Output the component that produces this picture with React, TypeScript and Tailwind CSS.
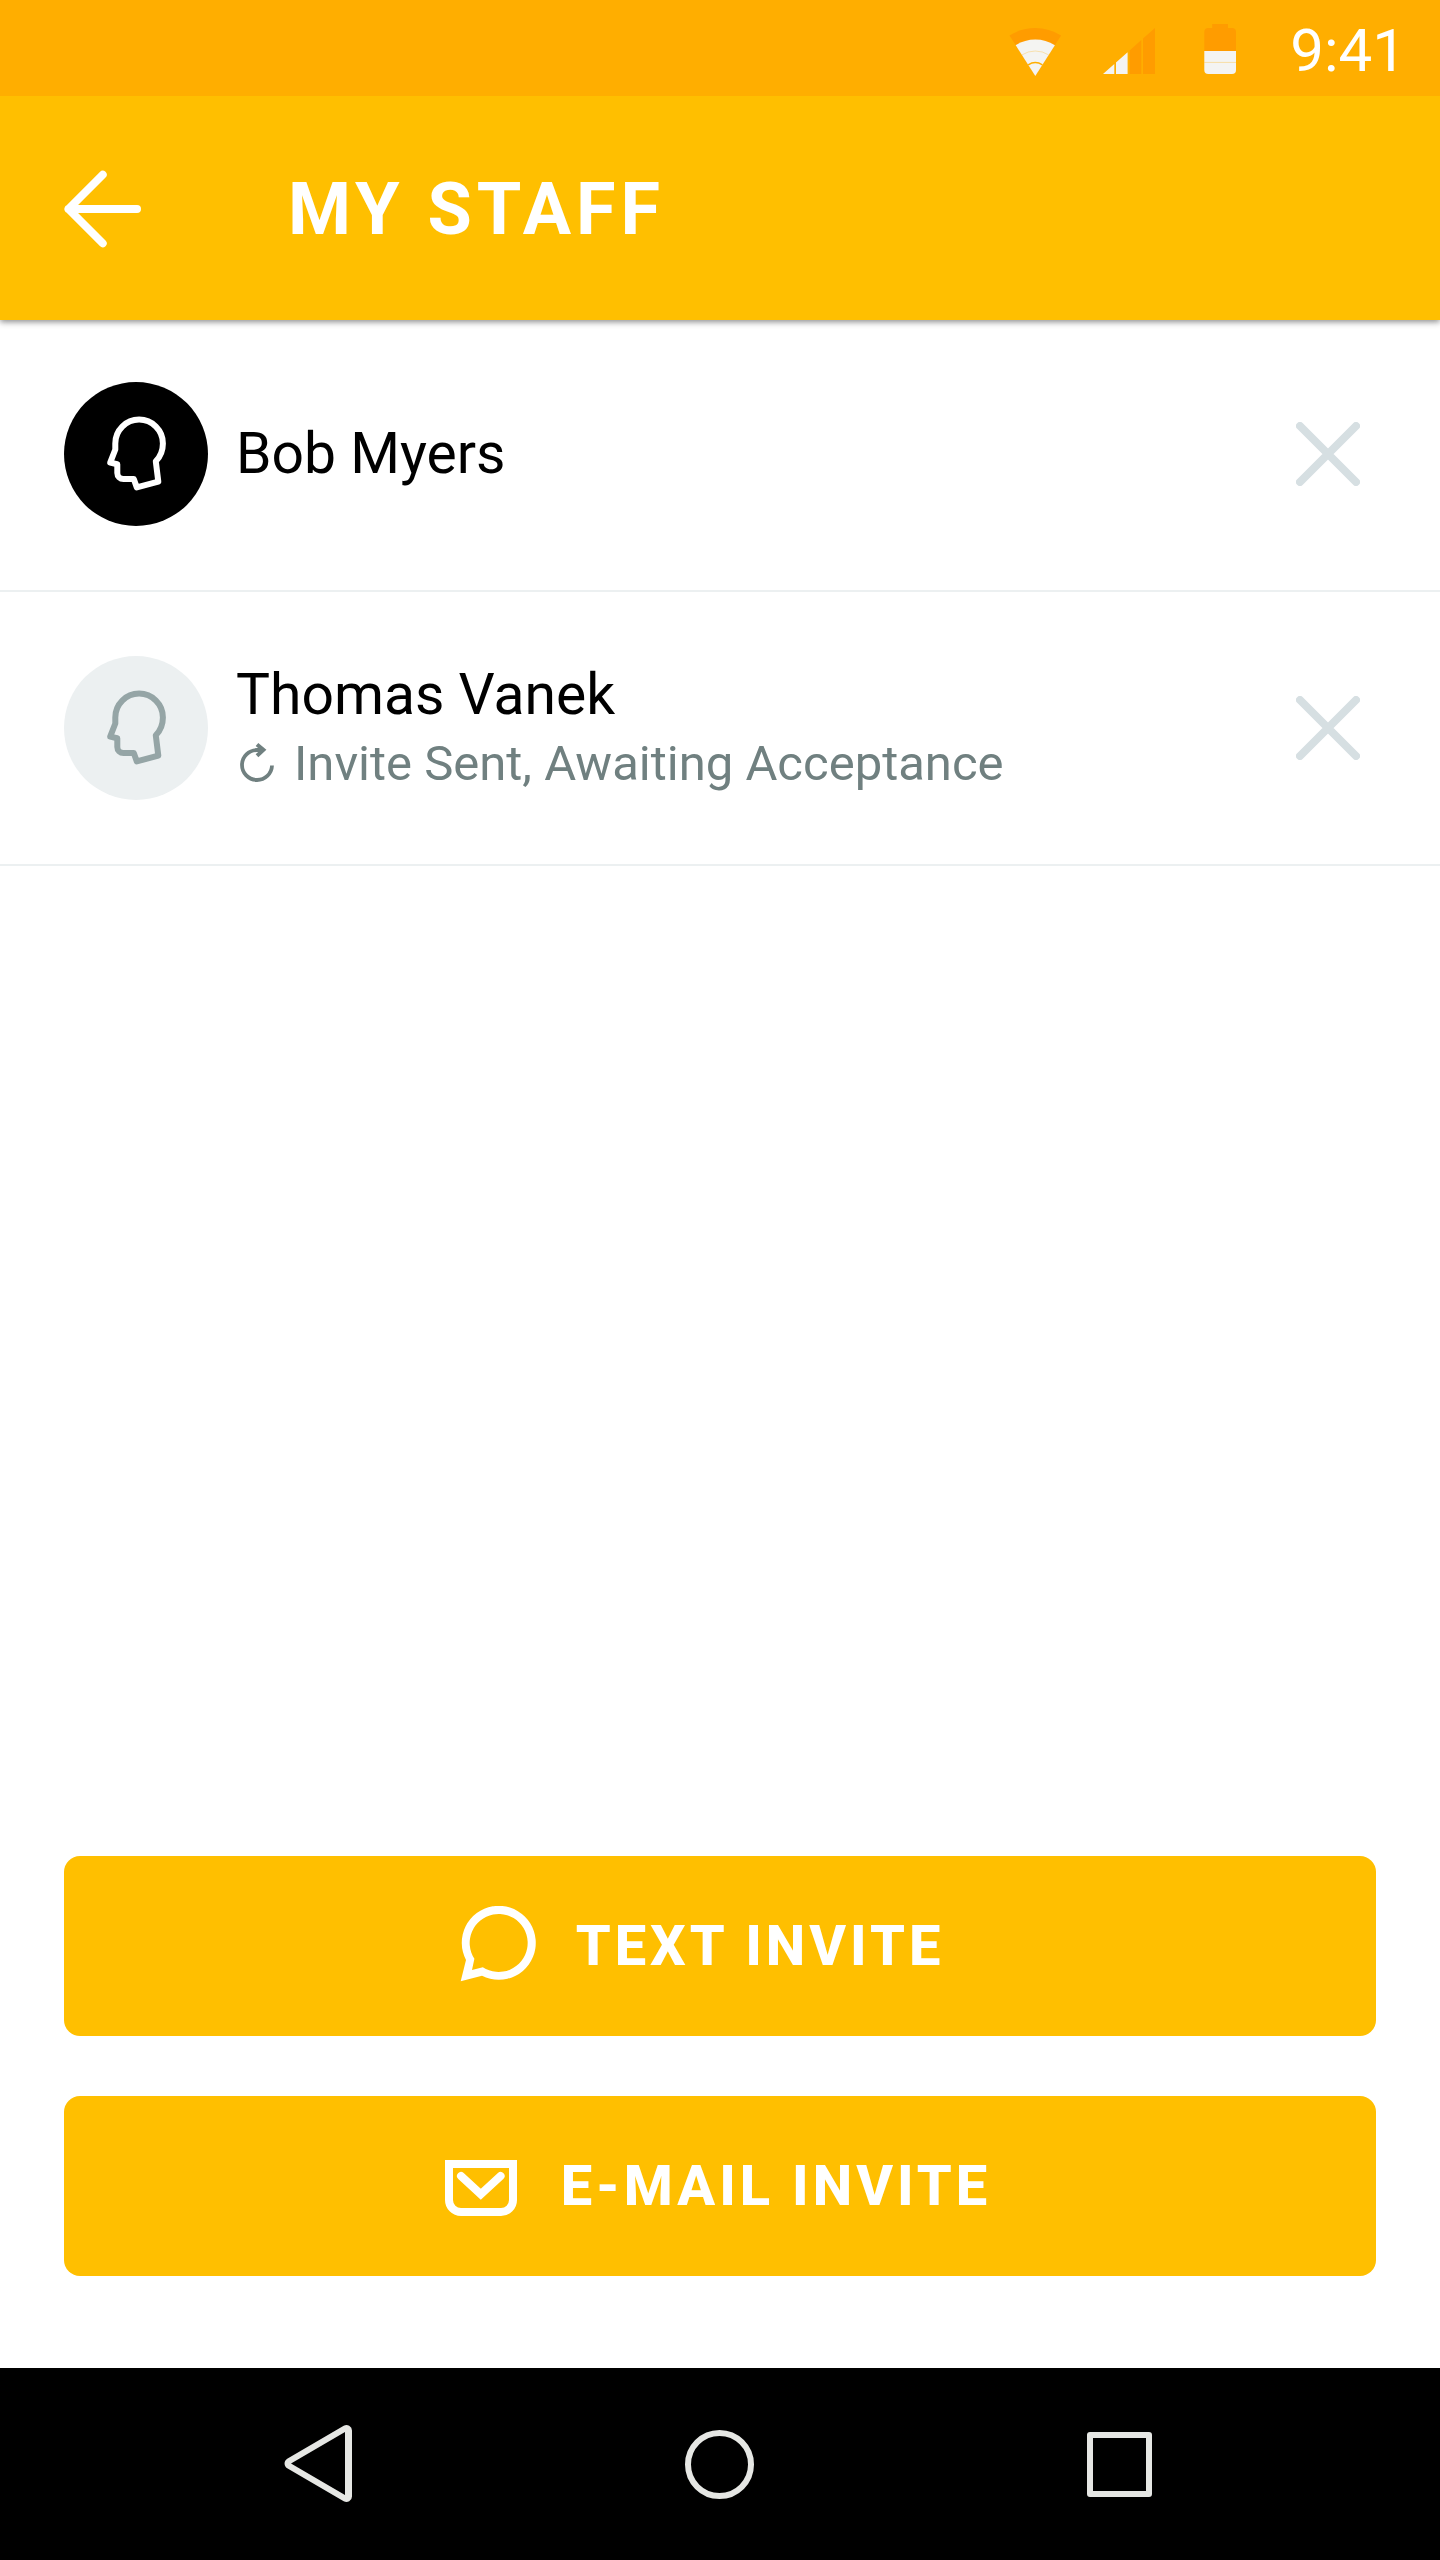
type StaffMember = {
  name: string;
  pending?: boolean;
};

const staff: StaffMember[] = [
  { name: "Bob Myers" },
  { name: "Thomas Vanek", pending: true },
];

function WifiIcon() {
  return (
    <svg viewBox="0 0 54 56" className="h-14 w-[54px]" aria-hidden="true">
      <path d="M27.3 53 L1.5 12.5 A48 48 0 0 1 53.1 12.5 Z" fill="#ff9c00" />
      <path d="M27.3 53 L7.7 22.2 A36.5 36.5 0 0 1 46.9 22.2 Z" fill="#f4f4f2" />
      <path d="M13.9 31.9 A25 25 0 0 1 40.7 31.9" fill="none" stroke="#ffae00" strokeOpacity="0.4" strokeWidth="0.7" />
      <path d="M20.2 41.8 A13 13 0 0 1 34.4 41.8" fill="none" stroke="#ffae00" strokeWidth="1.4" />
    </svg>
  );
}

function SignalIcon() {
  return (
    <svg viewBox="0 0 54 56" className="h-14 w-[54px]" aria-hidden="true">
      <path d="M1 51 L12.3 41 V51 Z M14 39.5 L25.6 29.2 V51 H14 Z" fill="#f4f4f2" />
      <path d="M27.7 27.4 L39.3 17.1 V51 H27.7 Z M41 15.6 L53 5 V51 H41 Z" fill="#ff9c00" />
    </svg>
  );
}

function BatteryIcon() {
  return (
    <svg viewBox="0 0 54 56" className="h-14 w-[54px]" aria-hidden="true">
      <path d="M8.3 28 V9 A4 4 0 0 1 12.3 5 H16.2 V1 H32 V5 H36 A4 4 0 0 1 40 9 V28 Z" fill="#ff9c00" />
      <path d="M8.3 28 H40 V47 A4 4 0 0 1 36 51 H12.3 A4 4 0 0 1 8.3 47 Z" fill="#f4f4f2" />
      <path d="M8.3 39.4 H40" stroke="#ffae00" strokeOpacity="0.4" strokeWidth="0.8" />
    </svg>
  );
}

function BackArrow() {
  return (
    <svg viewBox="0 0 80 80" className="size-20" fill="none" stroke="currentColor" strokeWidth="8" strokeLinecap="round" strokeLinejoin="round" aria-hidden="true">
      <path d="M38.7 6.7 L4.5 41 L38.7 75.3 M4.5 41 H73" />
    </svg>
  );
}

function HeadIcon() {
  return (
    <svg viewBox="0 0 144 144" className="size-36" fill="none" stroke="currentColor" strokeWidth="6" strokeLinejoin="round" aria-hidden="true">
      <path d="M51.3 61.4 A23.8 23.8 0 0 1 98.9 61.4 C98.9 68.5 96.3 74.6 91.8 79.3 L94.3 99.6 L72.8 105.4 L69.8 97 H59.5 C56 97 53.3 94.5 53.3 91 V82.2 L46.2 80.6 L51.3 67.5 Z" />
    </svg>
  );
}

function RefreshIcon() {
  return (
    <svg viewBox="0 2 46 46" className="size-[46px]" fill="none" stroke="currentColor" strokeWidth="4" aria-hidden="true">
      <path d="M36 26.5 A15 15 0 1 1 21 11 H26" strokeWidth="3.8" />
      <path d="M21 5.4 L27.4 10.9 L21 16.8" />
    </svg>
  );
}

function CrossIcon() {
  return (
    <svg viewBox="0 0 64 64" className="size-16" stroke="currentColor" strokeWidth="8" strokeLinecap="round" aria-hidden="true">
      <path d="M4 4 L60 60 M60 4 L4 60" />
    </svg>
  );
}

function ChatIcon() {
  return (
    <svg viewBox="0 0 76 80" className="h-20 w-[76px]" fill="currentColor" fillRule="evenodd" aria-hidden="true">
      <path d="M6 54 L0.7 75.3 L22 69.8 A37 37 0 1 0 6 54 Z M14.4 52.8 L12 64 L22.8 61.2 A29 29 0 1 0 14.4 52.8 Z" />
    </svg>
  );
}

function MailIcon() {
  return (
    <svg viewBox="0 0 72 60" className="h-[60px] w-[72px]" fill="none" stroke="currentColor" strokeWidth="8" aria-hidden="true">
      <path d="M4 8 H68 V44 A12 12 0 0 1 56 56 H16 A12 12 0 0 1 4 44 Z" />
      <path d="M16 20 L35.8 38.2 L55.6 20" strokeLinecap="round" />
    </svg>
  );
}

function StaffRow({ name, pending }: StaffMember) {
  return (
    <li className="flex items-center border-b-2 border-[#ecf0f1] px-16 py-16">
      <span className={pending ? "rounded-full bg-[#ecf0f1] text-[#95a5a6]" : "rounded-full bg-black text-white"}>
        <HeadIcon />
      </span>
      <div className="ml-7 flex-1">
        <p className="text-[57px] leading-[72px] text-black">{name}</p>
        {pending && (
          <p className="flex items-center gap-3 text-[49px] leading-[66px] text-[#708080]">
            <RefreshIcon />
            Invite Sent, Awaiting Acceptance
          </p>
        )}
      </div>
      <button type="button" aria-label={`Remove ${name}`} className="mr-4 text-[#d6dfe2]">
        <CrossIcon />
      </button>
    </li>
  );
}

export default function App() {
  return (
    <div className="flex min-h-screen flex-col bg-white font-['Roboto',sans-serif]">
      <div className="relative z-10 flex h-24 items-center justify-end gap-10 bg-[#ffae00] pt-1.5 pr-[34px]">
        <WifiIcon />
        <SignalIcon />
        <BatteryIcon />
        <time className="text-6xl leading-none text-white">9:41</time>
      </div>

      <header className="relative flex h-56 items-center gap-36 bg-[#ffbf00] px-16 text-white shadow-[0_2px_6px_rgba(0,0,0,0.45)]">
        <button type="button" aria-label="Back">
          <BackArrow />
        </button>
        <h1 className="pt-1 text-7xl font-bold tracking-[5px]">MY STAFF</h1>
      </header>

      <main className="-mt-0.5 flex flex-1 flex-col">
        <ul>
          {staff.map((member) => (
            <StaffRow key={member.name} {...member} />
          ))}
        </ul>
        <div className="mt-auto flex flex-col gap-15 px-16 pb-23 text-[56px] font-extrabold tracking-[4px] text-white">
          <button type="button" className="flex h-45 items-center justify-center gap-10 rounded-2xl bg-[#ffbf00] pr-9">
            <ChatIcon />
            TEXT INVITE
          </button>
          <button type="button" className="flex h-45 items-center justify-center gap-11 rounded-2xl bg-[#ffbf00] pr-1">
            <MailIcon />
            E-MAIL INVITE
          </button>
        </div>
      </main>

      <nav aria-label="System" className="grid h-48 grid-cols-3 bg-black px-30 text-[#e6e7e4]">
        <button type="button" aria-label="Back" className="flex items-center justify-center">
          <svg viewBox="0 0 72 80" className="h-20 w-18" fill="currentColor" fillRule="evenodd" aria-hidden="true">
            <path d="M3.2 34.8 L59.7 1.8 A5.5 5.5 0 0 1 68 6.5 V72.5 A5.5 5.5 0 0 1 59.7 77.2 L3.2 44.2 A5.5 5.5 0 0 1 3.2 34.8 Z M7 39.5 L61 71 V8 Z" />
          </svg>
        </button>
        <button type="button" aria-label="Home" className="flex items-center justify-center">
          <svg viewBox="0 0 72 72" className="size-18" fill="none" stroke="currentColor" strokeWidth="6" aria-hidden="true">
            <circle cx="35.5" cy="36.5" r="31.5" />
          </svg>
        </button>
        <button type="button" aria-label="Recent apps" className="flex items-center justify-center">
          <svg viewBox="0 0 72 72" className="size-18" fill="none" stroke="currentColor" strokeWidth="6" aria-hidden="true">
            <path d="M6 7 H65 V66 H6 Z" strokeLinejoin="round" />
          </svg>
        </button>
      </nav>
    </div>
  );
}
